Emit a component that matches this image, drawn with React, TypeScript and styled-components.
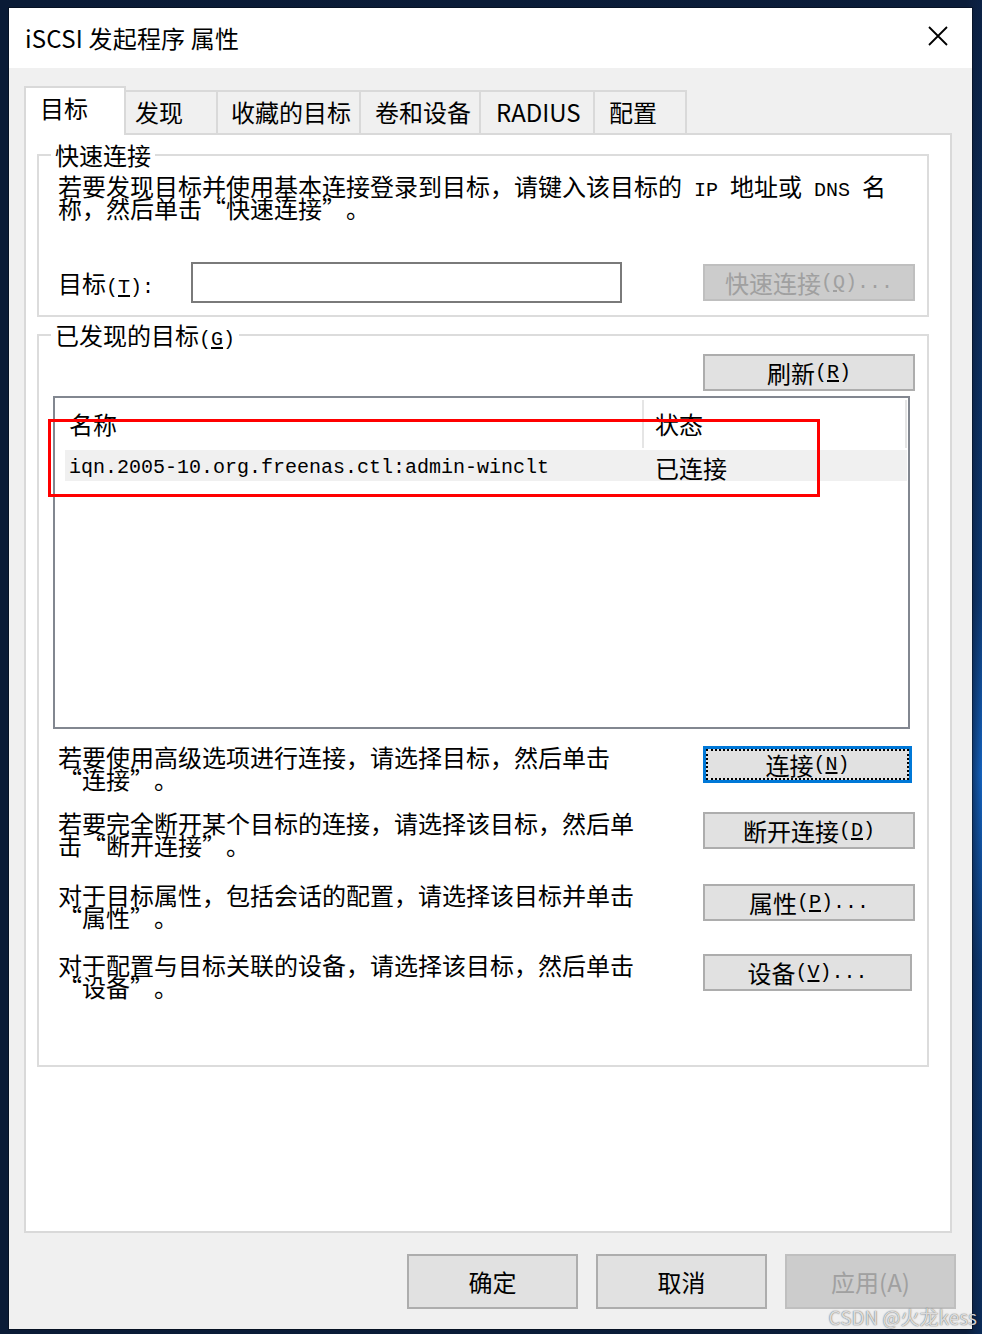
import React from "react";
import styled, { createGlobalStyle, css } from "styled-components";

const CJK = `"Noto Sans CJK SC", "Noto Sans", sans-serif`;
const MONO = `"Liberation Mono", "DejaVu Sans Mono", monospace`;

const Global = createGlobalStyle`
  html, body { margin: 0; padding: 0; }
  body {
    width: 982px;
    height: 1334px;
    overflow: hidden;
    font-family: ${CJK};
    color: #000;
    background:
      linear-gradient(90deg, #0a1b36 0px, #0b1d3a 966px, rgba(11, 29, 58, 0) 982px),
      linear-gradient(180deg, #0c2245 0%, #0e3a74 45%, #1463c0 58%, #0d3a75 72%, #0b2b58 100%);
  }
  #root { width: 982px; height: 1334px; }
`;

const Page = styled.div`
  position: relative;
  box-sizing: border-box;
  width: 982px;
  height: 1334px;
  padding: 8px 10px 5px 9px;
`;

const Window = styled.div`
  width: 963px;
  height: 1321px;
  display: flex;
  flex-direction: column;
  background: #f0f0f0;
  box-shadow: 0 0 0 1px rgba(0, 0, 0, 0.35);
`;

const TitleBar = styled.div`
  flex: none;
  height: 60px;
  background: #fff;
  display: flex;
  align-items: center;
  justify-content: space-between;
  padding: 0 24px 0 16px;
`;

const Title = styled.div`
  font-size: 24px;
  letter-spacing: 0.2px;
  color: #000;
  margin-bottom: 2px;
`;

const CloseIcon = styled.svg`
  width: 20px;
  height: 20px;
  margin-bottom: 4px;
`;

const Body = styled.div`
  flex: 1;
  display: flex;
  flex-direction: column;
  padding: 18px 16px 20px 15px;
  min-height: 0;
`;

const TabRow = styled.div`
  flex: none;
  display: flex;
  align-items: flex-end;
`;

const Tab = styled.div<{ $active?: boolean; $w: number; $pad: number }>`
  box-sizing: border-box;
  width: ${(p) => p.$w}px;
  border: 2px solid #d9d9d9;
  border-bottom: none;
  font-size: 24px;
  line-height: 40px;
  white-space: nowrap;
  padding-left: ${(p) => p.$pad}px;
  ${(p) =>
    p.$active
      ? css`
          height: 49px;
          background: #fff;
          margin-bottom: -2px;
          position: relative;
          z-index: 1;
        `
      : css`
          height: 43px;
          background: #f0f0f0;
          border-left: none;
        `}
`;

const Panel = styled.div`
  flex: 1;
  display: flex;
  flex-direction: column;
  background: #fff;
  border: 2px solid #d9d9d9;
  margin-right: 4px;
  padding: 8px 21px 0 11px;
`;

const Group = styled.fieldset<{ $mt: number; $pb: number }>`
  margin: ${(p) => p.$mt}px 0 0 0;
  min-width: 0;
  border: 2px solid #dcdcdc;
  padding: 0 0 ${(p) => p.$pb}px 0;
`;

const Legend = styled.legend`
  margin-left: 12px;
  padding: 0 4px;
  font-size: 24px;
  line-height: 24px;
`;

const Desc = styled.p<{ $mt?: number }>`
  margin: ${(p) => p.$mt ?? 0}px 0 0 0;
  padding-left: 19px;
  font-size: 24px;
  line-height: 22px;
  white-space: nowrap;
`;

const Lat = styled.span`
  font-family: ${MONO};
  font-size: 20px;
  line-height: 0;
  white-space: pre;
`;

const Quote = styled.span<{ $open?: boolean }>`
  display: inline-block;
  width: 24px;
  line-height: 0;
  text-align: ${(p) => (p.$open ? "right" : "left")};
  padding: ${(p) => (p.$open ? "0 2px 0 0" : "0")};
  box-sizing: border-box;
`;

const Key = styled.span`
  text-decoration: underline;
  text-underline-offset: 2px;
`;

const TargetRow = styled.div`
  display: flex;
  align-items: center;
  height: 41px;
  margin-top: 43px;
  padding: 0 12px 0 19px;
`;

const FieldLabel = styled.label`
  flex: none;
  width: 133px;
  font-size: 24px;
`;

const TextInput = styled.div`
  flex: none;
  box-sizing: border-box;
  width: 431px;
  height: 41px;
  border: 2px solid #7a7a7a;
  background: #fff;
`;

const Btn = styled.button<{ $w?: number; $focus?: boolean }>`
  flex: none;
  box-sizing: border-box;
  width: ${(p) => p.$w ?? 212}px;
  height: 37px;
  margin: 0;
  padding: 0;
  background: #e1e1e1;
  border: 2px solid #adadad;
  font-family: ${CJK};
  font-size: 24px;
  line-height: 1;
  color: #000;
  display: flex;
  align-items: center;
  justify-content: center;
  white-space: nowrap;
  ${(p) =>
    p.$focus &&
    css`
      border: 3px solid #0078d7;
      outline: 2px dotted #000;
      outline-offset: -5px;
    `}
  &:disabled {
    background: #cccccc;
    border-color: #bfbfbf;
    color: #a0a0a0;
  }
`;

const PushRight = styled.div`
  margin-left: auto;
`;

const RefreshRow = styled.div`
  display: flex;
  justify-content: flex-end;
  margin-top: 7px;
  padding-right: 12px;
`;

const List = styled.div`
  position: relative;
  box-sizing: border-box;
  height: 333px;
  margin: 5px 17px 0 14px;
  padding: 2px 0 0 10px;
  border: 2px solid #828790;
  background: #fff;
`;

const ListGrid = styled.div<{ $row?: boolean }>`
  display: grid;
  grid-template-columns: 579px 263px;
  ${(p) =>
    p.$row
      ? css`
          height: 31px;
          margin-top: 2px;
          width: 842px;
          background: #f0f0f0;
        `
      : css`
          height: 48px;
        `}
`;

const HeadCell = styled.div<{ $pad: number }>`
  box-sizing: border-box;
  padding-left: ${(p) => p.$pad}px;
  border-right: 2px solid #e5e5e5;
  font-size: 24px;
  line-height: 48px;
`;

const Cell = styled.div<{ $pad: number; $mono?: boolean }>`
  padding-left: ${(p) => p.$pad}px;
  display: flex;
  align-items: center;
  white-space: nowrap;
  font-family: ${(p) => (p.$mono ? MONO : CJK)};
  font-size: ${(p) => (p.$mono ? 20 : 24)}px;
`;

const Highlight = styled.div`
  position: absolute;
  left: -7px;
  top: 21px;
  width: 772px;
  height: 78px;
  box-sizing: border-box;
  border: 3px solid #ff0000;
  pointer-events: none;
`;

const ActionRow = styled.div<{ $mt: number }>`
  display: flex;
  align-items: flex-start;
  margin-top: ${(p) => p.$mt}px;
`;

const ActionText = styled(Desc)`
  flex: none;
  width: 664px;
  box-sizing: border-box;
  margin: 0;
`;

const Footer = styled.div`
  flex: none;
  display: flex;
  justify-content: flex-end;
  gap: 18px;
  margin-top: 21px;
`;

const FooterBtn = styled.button`
  box-sizing: border-box;
  width: 171px;
  height: 55px;
  margin: 0;
  padding: 0;
  background: #e1e1e1;
  border: 2px solid #adadad;
  font-family: ${CJK};
  font-size: 24px;
  color: #000;
  &:disabled {
    background: #cccccc;
    border-color: #bfbfbf;
    color: #a0a0a0;
  }
`;

const Watermark = styled.div`
  position: absolute;
  right: 5px;
  bottom: 6px;
  font-family: ${CJK};
  font-size: 19px;
  line-height: 22px;
  color: rgba(235, 235, 235, 0.9);
  text-shadow: 0 0 1px rgba(0, 0, 0, 0.55), 0 0 2px rgba(0, 0, 0, 0.25);
  pointer-events: none;
`;

const tabs = [
  { label: "目标", w: 102, pad: 14, active: true },
  { label: "发现", w: 92, pad: 9 },
  { label: "收藏的目标", w: 143, pad: 13 },
  { label: "卷和设备", w: 120, pad: 14 },
  { label: "RADIUS", w: 114, pad: 15 },
  { label: "配置", w: 92, pad: 14 },
];

const M = ({ k, after }: { k: string; after?: string }) => (
  <Lat>
    (<Key>{k}</Key>){after ?? ""}
  </Lat>
);

const Q = ({ children }: { children: React.ReactNode }) => (
  <>
    <Quote $open>“</Quote>
    {children}
    <Quote>”</Quote>
  </>
);

const actions = [
  {
    mt: 17,
    l1: "若要使用高级选项进行连接，请选择目标，然后单击",
    l2: (
      <>
        <Q>连接</Q>。
      </>
    ),
    btn: (
      <>
        连接<M k="N" />
      </>
    ),
    w: 209,
    focus: true,
  },
  {
    mt: 22,
    l1: "若要完全断开某个目标的连接，请选择该目标，然后单",
    l2: (
      <>
        击<Q>断开连接</Q>。
      </>
    ),
    btn: (
      <>
        断开连接<M k="D" />
      </>
    ),
    w: 212,
  },
  {
    mt: 28,
    l1: "对于目标属性，包括会话的配置，请选择该目标并单击",
    l2: (
      <>
        <Q>属性</Q>。
      </>
    ),
    btn: (
      <>
        属性<M k="P" after="..." />
      </>
    ),
    w: 212,
  },
  {
    mt: 26,
    l1: "对于配置与目标关联的设备，请选择该目标，然后单击",
    l2: (
      <>
        <Q>设备</Q>。
      </>
    ),
    btn: (
      <>
        设备<M k="V" after="..." />
      </>
    ),
    w: 209,
  },
];

export default function App() {
  return (
    <Page lang="zh-CN">
      <Global />
      <Window>
        <TitleBar>
          <Title>iSCSI 发起程序 属性</Title>
          <CloseIcon viewBox="0 0 20 20">
            <path d="M1 1 L19 19 M19 1 L1 19" stroke="#000" strokeWidth="1.8" fill="none" />
          </CloseIcon>
        </TitleBar>
        <Body>
          <TabRow>
            {tabs.map((t) => (
              <Tab key={t.label} $active={t.active} $w={t.w} $pad={t.pad}>
                {t.label}
              </Tab>
            ))}
          </TabRow>
          <Panel>
            <Group $mt={0} $pb={12}>
              <Legend>快速连接</Legend>
              <Desc $mt={8}>
                若要发现目标并使用基本连接登录到目标，请键入该目标的<Lat> IP </Lat>地址或<Lat> DNS </Lat>名
                <br />
                称，然后单击<Q>快速连接</Q>。
              </Desc>
              <TargetRow>
                <FieldLabel>
                  目标<Lat>(<Key>T</Key>):</Lat>
                </FieldLabel>
                <TextInput />
                <PushRight>
                  <Btn disabled>
                    快速连接<M k="Q" after="..." />
                  </Btn>
                </PushRight>
              </TargetRow>
            </Group>

            <Group $mt={6} $pb={67}>
              <Legend>
                已发现的目标<M k="G" />
              </Legend>
              <RefreshRow>
                <Btn>
                  刷新<M k="R" />
                </Btn>
              </RefreshRow>
              <List>
                <ListGrid>
                  <HeadCell $pad={4}>名称</HeadCell>
                  <HeadCell $pad={11}>状态</HeadCell>
                </ListGrid>
                <ListGrid $row>
                  <Cell $pad={4} $mono>
                    iqn.2005-10.org.freenas.ctl:admin-winclt
                  </Cell>
                  <Cell $pad={11}>已连接</Cell>
                </ListGrid>
                <Highlight />
              </List>
              {actions.map((a, i) => (
                <ActionRow key={i} $mt={a.mt}>
                  <ActionText>
                    {a.l1}
                    <br />
                    {a.l2}
                  </ActionText>
                  <Btn $w={a.w} $focus={a.focus}>
                    {a.btn}
                  </Btn>
                </ActionRow>
              ))}
            </Group>
          </Panel>
          <Footer>
            <FooterBtn>确定</FooterBtn>
            <FooterBtn>取消</FooterBtn>
            <FooterBtn disabled>应用(A)</FooterBtn>
          </Footer>
        </Body>
      </Window>
      <Watermark>CSDN @火龙kess</Watermark>
    </Page>
  );
}
